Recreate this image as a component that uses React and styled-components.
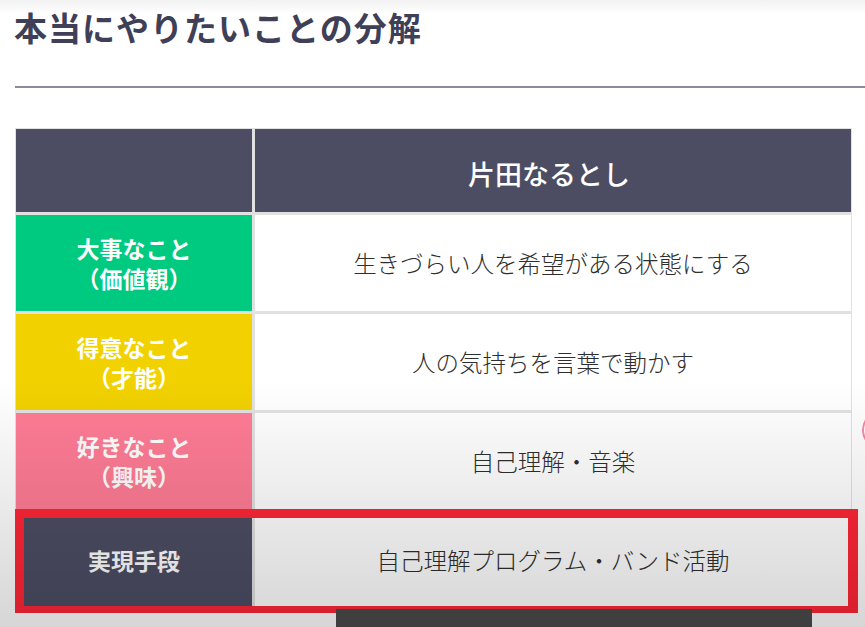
import styled, { createGlobalStyle } from "styled-components";

const GlobalStyle = createGlobalStyle`
  html, body {
    margin: 0;
    padding: 0;
    background: #ffffff;
    font-family: "Noto Sans CJK JP", "Noto Sans", sans-serif;
  }
`;

const rows = [
  { id: 1, label: ["大事なこと", "（価値観）"], color: "#00ca80", text: "生きづらい人を希望がある状態にする" },
  { id: 2, label: ["得意なこと", "（才能）"], color: "#f1d100", text: "人の気持ちを言葉で動かす" },
  { id: 3, label: ["好きなこと", "（興味）"], color: "#ff7c95", text: "自己理解・音楽" },
  { id: 4, label: ["実現手段"], color: "#4c4d63", text: "自己理解プログラム・バンド活動", highlight: true },
];

const App = () => {
  return (
    <Page>
      <GlobalStyle />
      <Title>本当にやりたいことの分解</Title>
      <Rule />
      <Table>
        <Row $height={83}>
          <Label $bg="#4c4d63" />
          <HeadCell>片田なるとし</HeadCell>
        </Row>
        {rows.map((row) => {
          const { id, label, color, text, highlight } = row;
          return (
            <Row key={id} $height={96} $highlight={highlight}>
              <Label $bg={color}>
                {label.map((line) => (
                  <span key={line}>{line}</span>
                ))}
              </Label>
              <Cell>{text}</Cell>
            </Row>
          );
        })}
      </Table>
      <PlayerBar />
      <EdgeDot />
      <Shade />
    </Page>
  );
};
export default App;

const Page = styled.div`
  position: relative;
  width: 865px;
  height: 627px;
  overflow: hidden;
  padding: 7px 0 0 14px;
  box-sizing: border-box;
  background: #ffffff;
`;

const Title = styled.h1`
  margin: 0;
  font-size: 33px;
  line-height: 40px;
  font-weight: 700;
  color: #3f3f58;
  letter-spacing: 1px;
`;

const Rule = styled.div`
  height: 2px;
  margin: 39px 0 40px 1px;
  background: #8b8ba0;
`;

const Table = styled.div`
  display: flex;
  flex-direction: column;
  gap: 3px;
  width: 837px;
  margin-left: 1px;
  padding: 1px;
  box-sizing: border-box;
  background: #e1e1e1;
`;

const Row = styled.div`
  position: relative;
  display: grid;
  grid-template-columns: 236px 596px;
  column-gap: 3px;
  height: ${(p) => p.$height}px;

  ${(p) =>
    p.$highlight &&
    `
    &::after{
      content:"";
      position:absolute;
      top:-3px;
      left:-1px;
      right:-7px;
      bottom:-5px;
      border-style:solid;
      border-color:#ff2636;
      border-width:9px 10px 7px 9px;
      pointer-events:none;
    }
  `}
`;

const Label = styled.div`
  display: flex;
  flex-direction: column;
  align-items: center;
  justify-content: center;
  background: ${(p) => p.$bg};
  color: #ffffff;
  font-size: 23px;
  font-weight: 700;
  line-height: 30px;
`;

const HeadCell = styled.div`
  display: flex;
  align-items: center;
  justify-content: center;
  background: #4c4d63;
  color: #ffffff;
  font-size: 27px;
  font-weight: 500;
  padding: 6px 8px 0 0;
  box-sizing: border-box;
`;

const Cell = styled.div`
  display: flex;
  align-items: center;
  justify-content: center;
  background: #ffffff;
  color: #2e2e2e;
  font-size: 23.5px;
  font-weight: 300;
`;

const PlayerBar = styled.div`
  position: absolute;
  left: 336px;
  top: 609px;
  width: 476px;
  height: 30px;
  background: #4a4a4a;
  z-index: 2;
`;

const EdgeDot = styled.div`
  position: absolute;
  left: 862px;
  top: 410px;
  width: 40px;
  height: 40px;
  border-radius: 50%;
  border: 2px solid #ff86a2;
  box-sizing: border-box;
`;

const Shade = styled.div`
  position: absolute;
  inset: 0;
  pointer-events: none;
  z-index: 3;
  background: linear-gradient(
    to bottom,
    rgba(0, 0, 0, 0.05) 0px,
    rgba(0, 0, 0, 0) 14px,
    rgba(0, 0, 0, 0) 380px,
    rgba(0, 0, 0, 0.16) 627px
  );
`;
